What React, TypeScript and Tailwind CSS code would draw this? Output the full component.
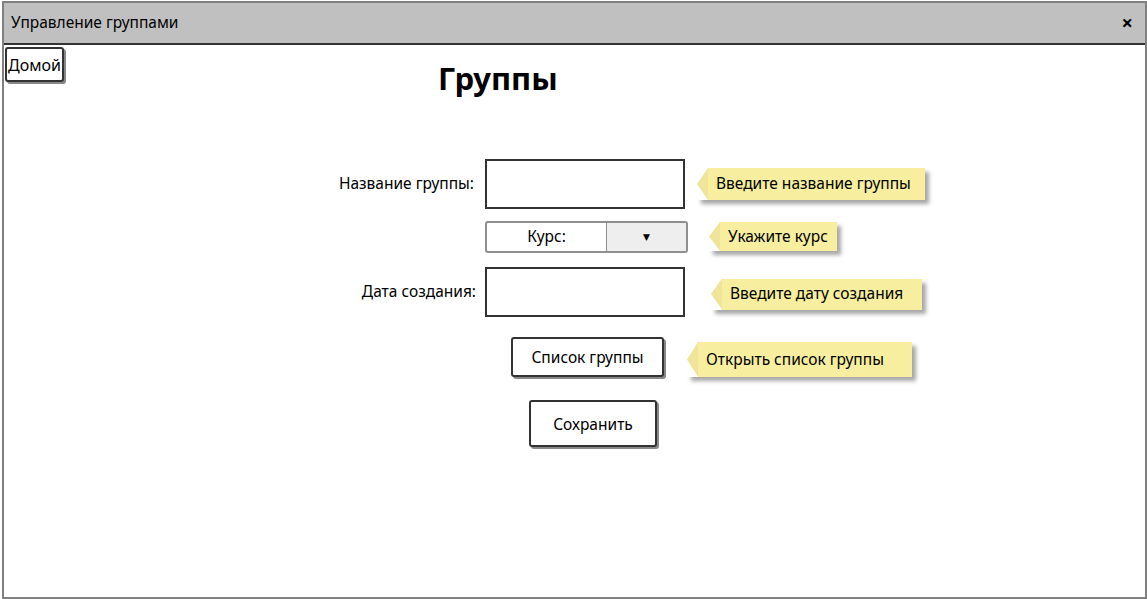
import React from "react";

const font = { fontFamily: '"Noto Sans", "DejaVu Sans", sans-serif' };

function Tip({ text, ml, h = 32, pr }: { text: string; ml: string; h?: number; pr: string }) {
  return (
    <div className={`flex items-stretch ${ml} shadow-[4px_4px_4px_rgba(0,0,0,0.35)]`} style={{ height: h }}>
      <div className="w-[11px] bg-[#efe49a] [clip-path:polygon(0_50%,100%_0,100%_100%)]" />
      <div className={`bg-[#f7ef9f] flex items-center pl-[8px] ${pr} text-[15.5px] text-black whitespace-nowrap`}>
        {text}
      </div>
    </div>
  );
}

export default function App() {
  return (
    <div className="w-[1147px] h-[599px] bg-white text-black" style={font}>
      <div className="ml-[2px] mt-[1px] w-[1145px] h-[598px] border-2 border-[#808080] flex flex-col bg-white">
        <div className="h-[42px] bg-[#c0c0c0] border-b-2 border-[#333] flex items-center justify-between pl-[7px] pr-[12px] shrink-0">
          <span className="text-[15.5px] leading-none">Управление группами</span>
          <span className="text-[20px] font-bold leading-none">×</span>
        </div>
        <div className="flex-1 flex flex-col">
          <div className="flex items-start h-[114px]">
            <button className="mt-[2px] ml-[1px] h-[35px] px-[1px] border-2 border-[#333] rounded-[3px] bg-white text-[16px] leading-none shadow-[2px_2px_0_#888]">
              Домой
            </button>
            <h1 className="ml-[374px] mt-[18px] text-[31px] font-bold leading-none">Группы</h1>
          </div>
          <div className="flex items-center h-[50px]">
            <div className="w-[481px] pr-[11px] text-right text-[15.5px]">Название группы:</div>
            <div className="w-[200px] h-[50px] border-2 border-[#333]" />
            <Tip text="Введите название группы" ml="ml-[12px]" h={32} pr="pr-[14px]" />
          </div>
          <div className="flex items-center h-[31px] mt-[12px]">
            <div className="w-[481px]" />
            <div className="w-[203px] h-[32px] border-2 border-[#8f8f8f] rounded-[3px] flex text-[15.5px]">
              <div className="w-[120px] flex items-center justify-center border-r border-[#8f8f8f]">Курс:</div>
              <div className="flex-1 bg-[#eeeeee] flex items-center justify-center text-[9px]">▼</div>
            </div>
            <Tip text="Укажите курс" ml="ml-[21px]" h={29} pr="pr-[9px]" />
          </div>
          <div className="flex items-center h-[50px] mt-[15px]">
            <div className="w-[481px] pr-[9px] text-right text-[15.5px]">Дата создания:</div>
            <div className="w-[200px] h-[50px] border-2 border-[#333]" />
            <div className="mt-[4px]">
              <Tip text="Введите дату создания" ml="ml-[26px]" h={31} pr="pr-[19px]" />
            </div>
          </div>
          <div className="flex items-center mt-[19px] h-[41px]">
            <div className="w-[507px]" />
            <button className="w-[153px] h-[40px] pt-[2px] border-2 border-[#333] rounded-[3px] bg-white text-[15.5px] shadow-[2px_2px_0_#888]">
              Список группы
            </button>
            <div className="mt-[6px]">
              <Tip text="Открыть список группы" ml="ml-[23px]" h={35} pr="pr-[28px]" />
            </div>
          </div>
          <div className="flex items-center mt-[23px]">
            <div className="w-[525px]" />
            <button className="w-[128px] h-[47px] pt-[2px] border-2 border-[#333] rounded-[3px] bg-white text-[15.5px] shadow-[2px_2px_0_#888]">
              Сохранить
            </button>
          </div>
        </div>
      </div>
    </div>
  );
}
